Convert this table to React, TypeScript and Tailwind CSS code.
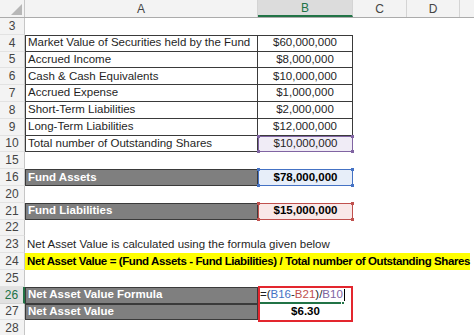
import React from 'react';

type Row = {
    n: number;
    a?: React.ReactNode;
    b?: React.ReactNode;
    kind?: 'box' | 'gray' | 'note' | 'yellow' | 'plain';
    frame?: 'purple' | 'blue' | 'red';
    first?: boolean;
};

const rows: Row[] = [
    { n: 3 },
    { n: 4, a: 'Market Value of Securities held by the Fund', b: '$60,000,000', kind: 'box', first: true },
    { n: 5, a: 'Accrued Income', b: '$8,000,000', kind: 'box' },
    { n: 6, a: 'Cash & Cash Equivalents', b: '$10,000,000', kind: 'box' },
    { n: 7, a: 'Accrued Expense', b: '$1,000,000', kind: 'box' },
    { n: 8, a: 'Short-Term Liabilities', b: '$2,000,000', kind: 'box' },
    { n: 9, a: 'Long-Term Liabilities', b: '$12,000,000', kind: 'box' },
    { n: 10, a: 'Total number of Outstanding Shares', b: '$10,000,000', kind: 'box', frame: 'purple' },
    { n: 15 },
    { n: 16, a: 'Fund Assets', b: '$78,000,000', kind: 'gray', frame: 'blue' },
    { n: 20 },
    { n: 21, a: 'Fund Liabilities', b: '$15,000,000', kind: 'gray', frame: 'red' },
    { n: 22 },
    { n: 23, a: 'Net Asset Value is calculated using the formula given below', kind: 'note' },
    { n: 24, a: 'Net Asset Value = (Fund Assets - Fund Liabilities) / Total number of Outstanding Shares', kind: 'yellow' },
    { n: 25 },
];

const frames = {
    purple: { box: 'border-[#8064a2] bg-[#f0ecf6]', dot: 'bg-[#8064a2]' },
    blue: { box: 'border-[#4472c4] bg-[#e7eef9]', dot: 'bg-[#4472c4]' },
    red: { box: 'border-[#c0504d] bg-[#f9e8e8]', dot: 'bg-[#c0504d]' },
};

function RowHead({ n, active }: { n: number; active?: boolean }) {
    return (
        <div className={`w-[25px] shrink-0 h-full flex items-center justify-center text-[12px] border-r border-b ${active ? 'bg-[#e1e1e1] text-[#217346] border-r-[#217346] border-r-2 border-b-[#d4d4d4]' : 'bg-[#f3f3f3] text-[#444] border-r-[#c6c6c6] border-b-[#e2e2e2]'}`}>
            {n}
        </div>
    );
}

function Framed({ tone, children, bold }: { tone: 'purple' | 'blue' | 'red'; children: React.ReactNode; bold?: boolean }) {
    const f = frames[tone];
    return (
        <div className={`relative w-[95px] shrink-0 h-full flex items-center justify-center border ${f.box} ${bold ? 'font-bold text-black' : ''}`}>
            {children}
            <span className={`absolute -left-[2px] -top-[2px] w-[3px] h-[3px] ${f.dot}`} />
            <span className={`absolute -right-[2px] -top-[2px] w-[3px] h-[3px] ${f.dot}`} />
            <span className={`absolute -left-[2px] -bottom-[2px] w-[3px] h-[3px] ${f.dot}`} />
            <span className={`absolute -right-[2px] -bottom-[2px] w-[3px] h-[3px] ${f.dot}`} />
        </div>
    );
}

function SheetRow({ r }: { r: Row }) {
    if (r.kind === 'box') {
        return (
            <div className="flex h-[16.8px]">
                <RowHead n={r.n} />
                <div className={`w-[233px] shrink-0 h-full flex items-center pl-[2px] border-l border-b border-r border-[#3a3a3a] ${r.first ? 'border-t' : ''}`}>{r.a}</div>
                {r.frame ? (
                    <Framed tone={r.frame}>{r.b}</Framed>
                ) : (
                    <div className={`w-[95px] shrink-0 h-full flex items-center justify-center border-r border-b border-[#3a3a3a] ${r.first ? 'border-t' : ''}`}>{r.b}</div>
                )}
            </div>
        );
    }
    if (r.kind === 'gray') {
        return (
            <div className="flex h-[16.8px]">
                <RowHead n={r.n} />
                <div className="w-[233px] shrink-0 h-full flex items-center pl-[2px] bg-[#7f7f7f] text-white font-bold border border-[#3a3a3a]">{r.a}</div>
                <Framed tone={r.frame!} bold>{r.b}</Framed>
            </div>
        );
    }
    if (r.kind === 'note') {
        return (
            <div className="flex h-[16.8px]">
                <RowHead n={r.n} />
                <div className="h-full flex items-center pl-[2px] whitespace-nowrap">{r.a}</div>
            </div>
        );
    }
    if (r.kind === 'yellow') {
        return (
            <div className="flex h-[16.8px]">
                <RowHead n={r.n} />
                <div className="w-[445px] shrink-0 h-full flex items-center pl-[2px] bg-[#ffff00] font-bold text-black whitespace-nowrap tracking-[-0.4px]">{r.a}</div>
            </div>
        );
    }
    return (
        <div className="flex h-[16.8px]">
            <RowHead n={r.n} />
        </div>
    );
}

export default function App() {
    return (
        <div className="w-[474px] h-[335px] overflow-hidden bg-white text-[#1f1f1f] text-[11.5px] leading-none" style={{ fontFamily: '"Liberation Sans", Arial, sans-serif' }}>
            {/* column headers */}
            <div className="flex h-[18px] bg-[#f3f3f3] text-[#444] text-[12px] border-b border-[#ababab]">
                <div className="w-[25px] shrink-0 h-full relative border-r border-[#c6c6c6]">
                    <svg className="absolute right-[2px] bottom-[2px]" width="11" height="11" viewBox="0 0 11 11">
                        <polygon points="11,0 11,11 0,11" fill="#b7b7b7" />
                    </svg>
                </div>
                <div className="w-[233px] shrink-0 flex items-center justify-center border-r border-[#d4d4d4]">A</div>
                <div className="w-[95px] shrink-0 flex items-center justify-center bg-[#dcdcdc] text-[#217346] border-b-2 border-[#217346] border-r border-r-[#d4d4d4]">B</div>
                <div className="w-[54px] shrink-0 flex items-center justify-center border-r border-[#d4d4d4]">C</div>
                <div className="w-[53px] shrink-0 flex items-center justify-center border-r border-[#d4d4d4]">D</div>
                <div className="flex-1" />
            </div>

            {rows.map((r) => (
                <SheetRow key={r.n} r={r} />
            ))}

            {/* formula + result with red annotation box */}
            <div className="relative">
                <div className="flex h-[16.8px]">
                    <RowHead n={26} active />
                    <div className="w-[233px] shrink-0 h-full flex items-center pl-[2px] bg-[#7f7f7f] text-white font-bold border border-[#3a3a3a]">Net Asset Value Formula</div>
                    <div className="relative w-[95px] shrink-0 h-full flex items-center pl-[2px]">
                        <span>=(</span>
                        <span className="text-[#4472c4]">B16</span>
                        <span>-</span>
                        <span className="text-[#c0504d]">B21</span>
                        <span>)/</span>
                        <span className="text-[#8064a2]">B10</span>
                        <span className="ml-px w-px h-[12px] bg-black" />
                        <span className="absolute left-0 right-[12px] bottom-0 h-[2px] bg-[#217346]" />
                        <span className="absolute right-[8px] bottom-[-1px] w-[4px] h-[4px] bg-[#217346] border border-white" />
                    </div>
                </div>
                <div className="flex h-[16.8px]">
                    <RowHead n={27} />
                    <div className="w-[233px] shrink-0 h-full flex items-center pl-[2px] bg-[#7f7f7f] text-white font-bold border border-[#3a3a3a]">Net Asset Value</div>
                    <div className="w-[95px] shrink-0 h-full flex items-center justify-center font-bold text-black">$6.30</div>
                </div>
                <div className="absolute left-[258px] top-[-1px] w-[95px] h-[36px] border-2 border-[#e3262e]" />
            </div>
            <div className="flex h-[16.8px]">
                <RowHead n={28} />
            </div>
        </div>
    );
}
